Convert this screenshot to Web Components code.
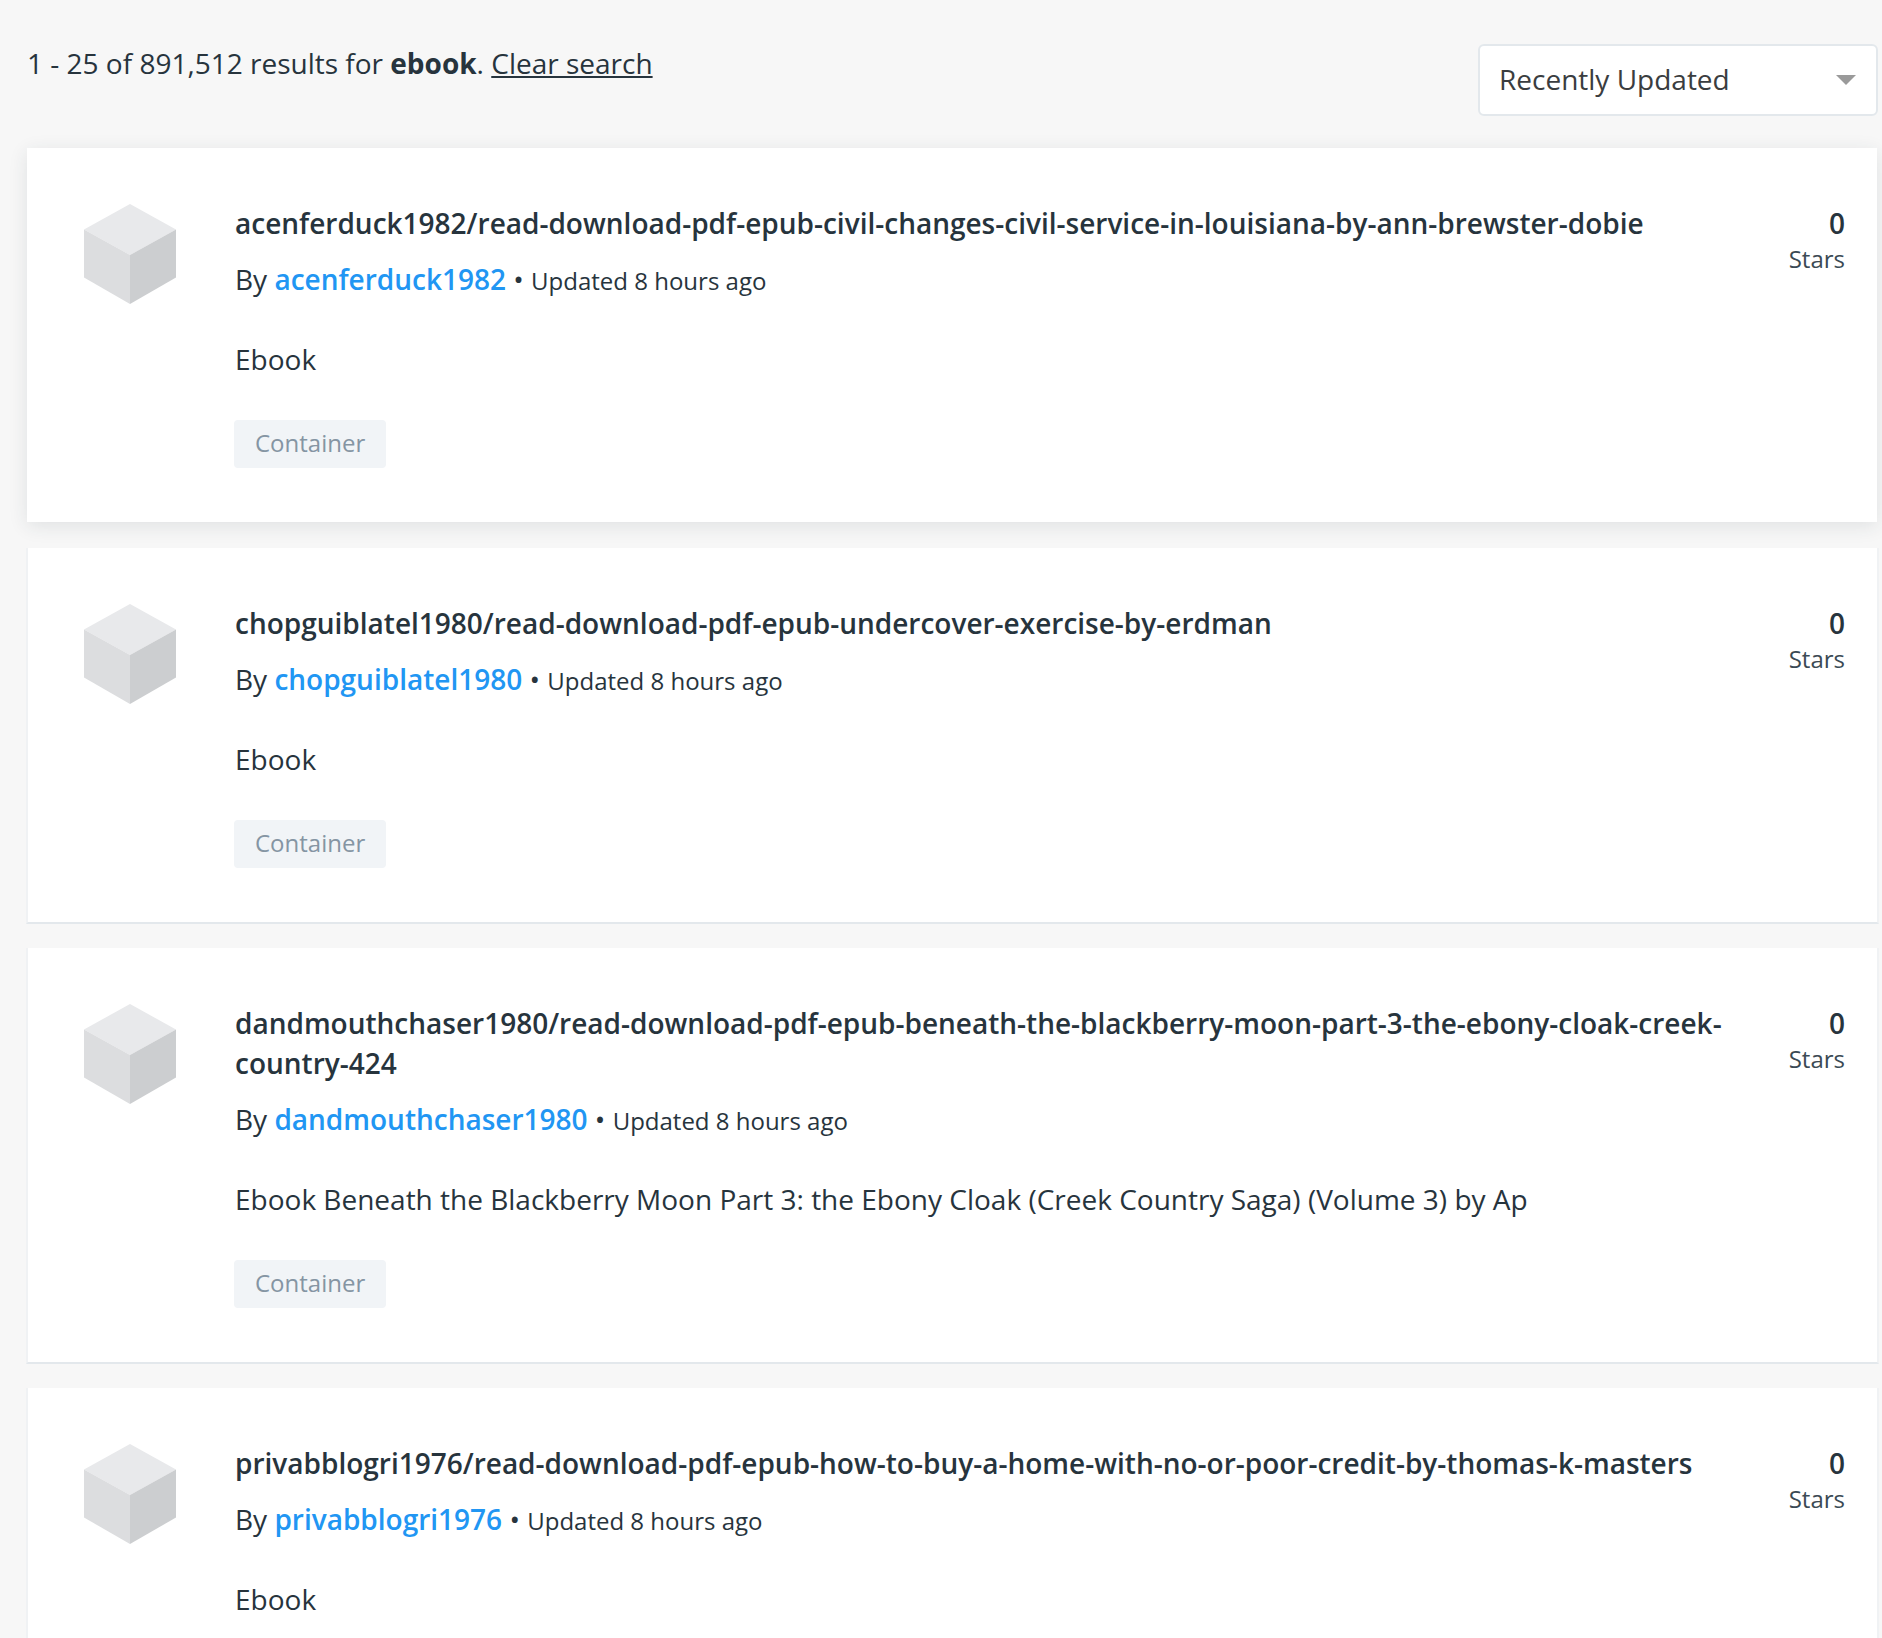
<!DOCTYPE html>
<html><head><meta charset="utf-8"><title>Search results</title>
<style>
html,body{margin:0;padding:0;background:#f7f7f7;overflow:hidden;height:1638px}
body{font-family:"Open Sans","Liberation Sans",sans-serif;color:#27343d}
</style></head><body>
<template id="t-page"><style>
:host{display:block;padding:0 5px 0 26px;box-sizing:border-box;width:1882px}
.top{display:flex;justify-content:space-between;align-items:flex-start;padding-top:44px;height:148px;box-sizing:border-box}
.list{display:flex;flex-direction:column;gap:24px}
</style><div class="top"><slot name="summary"></slot><slot name="sort"></slot></div><div class="list"><slot></slot></div></template>

<template id="t-summary"><style>
:host{display:block;font-size:28px;line-height:40px;color:#27343d;font-weight:400;margin:-1px 0 0 1px}
b{font-weight:700}a{color:inherit;text-decoration:underline}
</style><span>1 - 25 of 891,512 results for <b><slot></slot></b>. <a href="#">Clear search</a></span></template>

<template id="t-sort"><style>
:host{display:flex;align-items:center;justify-content:space-between;box-sizing:border-box;width:400px;height:72px;margin-right:-1px;background:#fff;border:2px solid #e3e8ec;border-radius:6px;padding:0 20px 2px 19px;font-size:28px;color:#3a3d40}
i{display:block;width:0;height:0;margin-top:2px;border-left:10px solid transparent;border-right:10px solid transparent;border-top:10px solid #9a9a9a}
</style><span><slot></slot></span><i></i></template>

<template id="t-card"><style>
:host{display:block;background:#fff;box-sizing:border-box;margin-right:-2px;padding:55px 32px 54px 56px;border-left:2px solid #f0f2f4;border-right:2px solid #f0f2f4;border-bottom:2px solid #e3e8ec}
:host([raised]){border:0;margin:0 0 2px 1px;padding:55px 32px 54px 57px;box-shadow:0 4px 18px rgba(39,52,61,.11)}
:host([no-tag]) .tag{display:none}
.row{display:flex}
.icon{flex:0 0 auto;width:92px;height:100px;margin:1px 59px 0 0;display:block}
.main{flex:1 1 auto;min-width:0}
.title{font-size:28px;line-height:40px;font-weight:600;color:#27343d;overflow-wrap:anywhere}
.meta{margin-top:16px;height:40px;line-height:40px;font-size:28px;color:#27343d;white-space:nowrap}
.meta a{color:#2196f3;text-decoration:none;font-weight:600}
.meta small{font-size:24px}
.desc{margin-top:40px;font-size:28px;line-height:40px;color:#27343d}
.tag{display:block;width:fit-content;margin:41px 0 0 -1px;height:48px;line-height:46px;padding:0 21px;background:#f1f4f7;color:#8595a3;font-size:24px;border-radius:4px}
.stars{flex:0 0 auto;width:80px;margin-left:24px;text-align:right}
.n{font-size:28px;line-height:40px;font-weight:600}
.s{font-size:24px;line-height:32px;color:#3b4a54}
</style><div class="row"><svg class="icon" viewBox="0 0 92 100" aria-hidden="true"><polygon points="46,0 92,25.5 46,51 0,25.5" fill="#e8e9eb"/><polygon points="0,25.5 46,51 46,100 0,73.5" fill="#dcdddf"/><polygon points="92,25.5 46,51 46,100 92,73.5" fill="#ccced0"/></svg>
<div class="main"><div class="title"><slot name="title"></slot></div><div class="meta">By <a href="#"><slot name="owner"></slot></a> • <small>Updated 8 hours ago</small></div><div class="desc"><slot name="desc"></slot></div><span class="tag">Container</span></div>
<div class="stars"><div class="n">0</div><div class="s">Stars</div></div></div></template>

<x-page>
<x-summary slot="summary">ebook</x-summary>
<x-sort slot="sort">Recently Updated</x-sort>
<x-card raised><span slot="title">acenferduck1982/read-download-pdf-epub-civil-changes-civil-service-in-louisiana-by-ann-brewster-dobie</span><span slot="owner">acenferduck1982</span><span slot="desc">Ebook</span></x-card>
<x-card><span slot="title">chopguiblatel1980/read-download-pdf-epub-undercover-exercise-by-erdman</span><span slot="owner">chopguiblatel1980</span><span slot="desc">Ebook</span></x-card>
<x-card><span slot="title">dandmouthchaser1980/read-download-pdf-epub-beneath-the-blackberry-moon-part-3-the-ebony-cloak-creek-country-424</span><span slot="owner">dandmouthchaser1980</span><span slot="desc">Ebook Beneath the Blackberry Moon Part 3: the Ebony Cloak (Creek Country Saga) (Volume 3) by Ap</span></x-card>
<x-card no-tag><span slot="title">privabblogri1976/read-download-pdf-epub-how-to-buy-a-home-with-no-or-poor-credit-by-thomas-k-masters</span><span slot="owner">privabblogri1976</span><span slot="desc">Ebook</span></x-card>
</x-page>
<script>
for(const [tag,tpl] of [['x-page','t-page'],['x-summary','t-summary'],['x-sort','t-sort'],['x-card','t-card']]){
customElements.define(tag,class extends HTMLElement{constructor(){super();this.attachShadow({mode:'open'}).appendChild(document.getElementById(tpl).content.cloneNode(true));}});
}
</script>
</body></html>
